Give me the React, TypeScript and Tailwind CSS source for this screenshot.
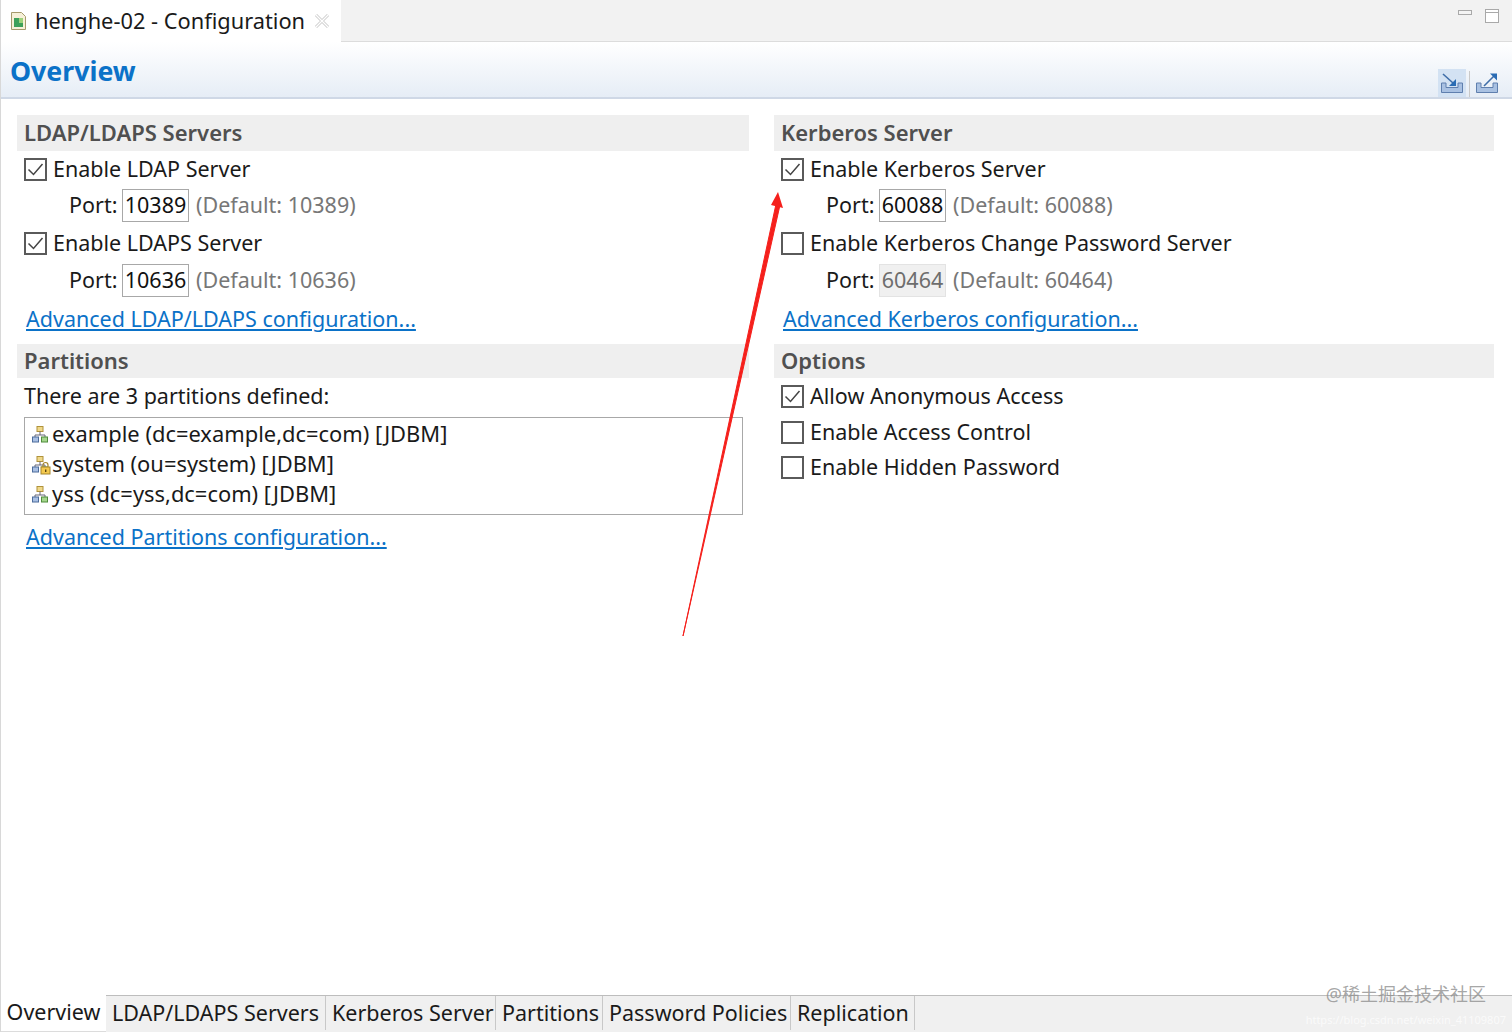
// App.tsx
const font = { fontFamily: '"Noto Sans", "Noto Sans CJK SC", sans-serif' };

function CheckBox({ checked }: { checked?: boolean }) {
  return (
    <span className="flex h-[23px] w-[23px] shrink-0 items-center justify-center border-2 border-[#5a5a5a] bg-white">
      {checked && (
        <svg width="17" height="15" viewBox="0 0 17 15" fill="none">
          <path d="M1.5 7.5 L6.5 12.5 L15.5 2" stroke="#444" strokeWidth="1.5" />
        </svg>
      )}
    </span>
  );
}

function SectionHeader({ title, tall }: { title: string; tall?: boolean }) {
  return (
    <div className={`flex items-center whitespace-nowrap bg-[#efefef] pb-[1px] pl-[7px] text-[22px] font-semibold text-[#505050] ${tall ? "h-[36px]" : "h-[34px]"}`}>
      {title}
    </div>
  );
}

function CheckRow({ label, checked, height }: { label: string; checked?: boolean; height: string }) {
  return (
    <div className={`flex items-center gap-[6px] whitespace-nowrap pl-[7px] ${height}`}>
      <CheckBox checked={checked} />
      <span className="text-[21.5px] text-[#1a1a1a]">{label}</span>
    </div>
  );
}

function PortRow({ value, height, disabled }: { value: string; height: string; disabled?: boolean }) {
  return (
    <div className={`flex items-center whitespace-nowrap pl-[52px] text-[21.5px] ${height}`}>
      <span className="w-[53px] text-[#1a1a1a]">Port:</span>
      <span
        className={`flex h-[33px] w-[67px] items-center justify-center border ${
          disabled ? "border-[#e3e3e3] bg-[#f0f0f0] text-[#6d6d6d]" : "border-[#a8a8a8] bg-white text-[#111]"
        }`}
      >
        {value}
      </span>
      <span className="ml-[7px] text-[#777]">(Default: {value})</span>
    </div>
  );
}

function FormLink({ label, height }: { label: string; height: string }) {
  return (
    <div className={`flex items-center whitespace-nowrap pl-[9px] ${height}`}>
      <a className="text-[21.5px] text-[#0b72c8] underline underline-offset-2">{label}</a>
    </div>
  );
}

function PartitionIcon({ locked }: { locked?: boolean }) {
  return (
    <svg width="20" height="20" viewBox="0 0 20 20" className="shrink-0">
      <rect x="6" y="1.5" width="6" height="5" fill="#f0d98a" stroke="#b0923a" />
      <path d="M9 6.5 V10 M4 12 V10 H14 V12" fill="none" stroke="#667" />
      <rect x="1.5" y="12" width="6" height="5" fill="#a9c0e4" stroke="#4c6c9c" />
      <rect x="10.5" y="12" width="6" height="5" fill="#a5d68c" stroke="#4f8c3c" />
      {locked && (
        <g>
          <path d="M12 12 V10 a2.5 2.5 0 0 1 5 0 V12" fill="none" stroke="#a5852c" strokeWidth="1.2" />
          <rect x="10" y="12" width="9" height="7" fill="#f4c94f" stroke="#a5852c" />
          <rect x="14" y="14.5" width="1.4" height="2.5" fill="#5a4510" />
        </g>
      )}
    </svg>
  );
}

function ToolbarIcon({ out }: { out?: boolean }) {
  return (
    <svg width="24" height="22" viewBox="0 0 24 22" fill="none">
      <path d="M1.5 11 V20.5 H22.5 V11 H18 V15.5 H6 V11 Z" fill="#a9c1e2" stroke="#5f7fae" />
      {out ? (
        <g>
          <path d="M9 14 L19 4" stroke="#3f6ea8" strokeWidth="1.6" />
          <path d="M15 1.5 H22 V8.5 Z" fill="#2a6cb4" />
        </g>
      ) : (
        <g>
          <path d="M3 2 L13 11" stroke="#3f6ea8" strokeWidth="1.6" />
          <path d="M16 14 H9 L16 7 Z" fill="#2a6cb4" />
        </g>
      )}
    </svg>
  );
}

const pageTabs = [
  { label: "LDAP/LDAPS Servers", width: "w-[220px]" },
  { label: "Kerberos Server", width: "w-[170px]" },
  { label: "Partitions", width: "w-[107px]" },
  { label: "Password Policies", width: "w-[188px]" },
  { label: "Replication", width: "w-[124px]" },
];

const partitions = [
  { label: "example (dc=example,dc=com) [JDBM]" },
  { label: "system (ou=system) [JDBM]", locked: true },
  { label: "yss (dc=yss,dc=com) [JDBM]" },
];

export default function App() {
  return (
    <div style={font} className="relative flex h-[1032px] w-[1512px] flex-col overflow-hidden border-l border-[#d8d8d8] bg-white">
      {/* editor tab */}
      <div className="flex h-[42px] shrink-0 items-stretch justify-between border-b border-[#dcdcdc] bg-[#f2f2f2]">
        <div className="-mb-px flex w-[340px] items-center whitespace-nowrap bg-white pl-[9px]">
          <svg width="17" height="20" viewBox="0 0 17 20" className="shrink-0">
            <path d="M1.5 1.5 H11.5 L15.5 5.5 V18.5 H1.5 Z" fill="#f6f0d8" stroke="#a59a6c" />
            <rect x="4" y="7" width="9" height="9" fill="#3da05a" />
            <rect x="9" y="7" width="4" height="5" fill="#9bd27a" />
          </svg>
          <span className="ml-[8px] w-[270px] pt-[1px] text-[21.8px] text-[#1a1a1a]">henghe-02 - Configuration</span>
          <svg width="16" height="16" viewBox="0 0 16 16" className="ml-[9px]" fill="none">
            <path d="M2 2 L14 14 M14 2 L2 14" stroke="#c9c9c9" strokeWidth="3" />
            <path d="M2 2 L14 14 M14 2 L2 14" stroke="#ffffff" strokeWidth="1.4" />
          </svg>
        </div>
        <div className="flex items-start gap-[13px] pr-[13px] pt-[9px]">
          <span className="mt-px h-[5px] w-[14px] border border-[#a9a9a9] bg-[#f4f4f4]" />
          <span className="h-[14px] w-[14px] border border-[#a9a9a9] bg-white">
            <span className="block h-[3px] border-b border-[#a9a9a9]" />
          </span>
        </div>
      </div>

      {/* form title */}
      <div className="flex h-[57px] shrink-0 items-center justify-between border-b-2 border-[#cfd8e6] bg-gradient-to-b from-white to-[#e6edf6] pl-[9px] pr-[13px]">
        <h1 className="pt-[3px] text-[26.7px] font-bold text-[#0b72c8]">Overview</h1>
        <div className="flex items-end self-end">
          <span className="flex h-[28px] w-[28px] items-center justify-center bg-[#d3e2f3]">
            <ToolbarIcon />
          </span>
          <span className="ml-[3px] mr-[5px] h-[26px] w-px bg-[#c9c9c9]" />
          <span className="flex h-[28px] items-center">
            <ToolbarIcon out />
          </span>
        </div>
      </div>

      {/* form body */}
      <div className="grid flex-1 grid-cols-[732px_720px] gap-x-[25px] pl-[16px] pt-[16px]">
        <div className="flex flex-col">
          <SectionHeader title="LDAP/LDAPS Servers" tall />
          <CheckRow label="Enable LDAP Server" checked height="h-[36px]" />
          <PortRow value="10389" height="h-[37px]" />
          <CheckRow label="Enable LDAPS Server" checked height="h-[38px]" />
          <PortRow value="10636" height="h-[36px]" />
          <FormLink label="Advanced LDAP/LDAPS configuration..." height="h-[42px]" />
          <div className="h-[4px]" />
          <SectionHeader title="Partitions" />
          <div className="flex h-[39px] items-center pb-[2px] pl-[7px] text-[21.5px] text-[#1a1a1a]">There are 3 partitions defined:</div>
          <div className="ml-[7px] mr-[6px] flex h-[98px] flex-col justify-center border border-[#a8a8a8] pb-[3px] pl-[6px]">
            {partitions.map((p) => (
              <div key={p.label} className="flex h-[30px] items-center gap-[1px] whitespace-nowrap text-[21.9px] text-[#1a1a1a]">
                <PartitionIcon locked={p.locked} />
                <span>{p.label}</span>
              </div>
            ))}
          </div>
          <FormLink label="Advanced Partitions configuration..." height="h-[44px]" />
        </div>

        <div className="flex flex-col">
          <SectionHeader title="Kerberos Server" tall />
          <CheckRow label="Enable Kerberos Server" checked height="h-[36px]" />
          <PortRow value="60088" height="h-[37px]" />
          <CheckRow label="Enable Kerberos Change Password Server" height="h-[38px]" />
          <PortRow value="60464" height="h-[36px]" disabled />
          <FormLink label="Advanced Kerberos configuration..." height="h-[42px]" />
          <div className="h-[4px]" />
          <SectionHeader title="Options" />
          <CheckRow label="Allow Anonymous Access" checked height="h-[37px]" />
          <CheckRow label="Enable Access Control" height="h-[35px]" />
          <CheckRow label="Enable Hidden Password" height="h-[35px]" />
        </div>
      </div>

      {/* page tabs */}
      <div className="flex h-[37px] shrink-0 whitespace-nowrap border-t border-[#bdbdbd] bg-[#f0f0f0] pb-[2px] text-[21.5px] text-[#1a1a1a]">
        <div className="-mb-[2px] -mt-px flex w-[105px] items-center justify-center border-b border-[#dcdcdc] bg-white pb-[2px]">Overview</div>
        {pageTabs.map((t) => (
          <div key={t.label} className={`flex items-center border-r border-[#c8c8c8] pl-[6px] ${t.width}`}>
            {t.label}
          </div>
        ))}
      </div>

      {/* red annotation arrow */}
      <svg className="pointer-events-none absolute left-0 top-0" width="1512" height="1032" fill="none">
        <path d="M682 636 L775 204 L779 205 Z" fill="#f5201c" stroke="#f5201c" strokeWidth="1" />
        <path d="M770 205 L777 192 L782 208 Z" fill="#f5201c" />
      </svg>

      {/* watermark */}
      <div className="absolute right-[26px] top-[982px] text-[18px] leading-[24px] text-[#8f8f8f]/80">@稀土掘金技术社区</div>
      <div className="absolute right-[6px] top-[1013px] text-[11px] leading-[14px] text-white/70">https://blog.csdn.net/weixin_41109807</div>
    </div>
  );
}
